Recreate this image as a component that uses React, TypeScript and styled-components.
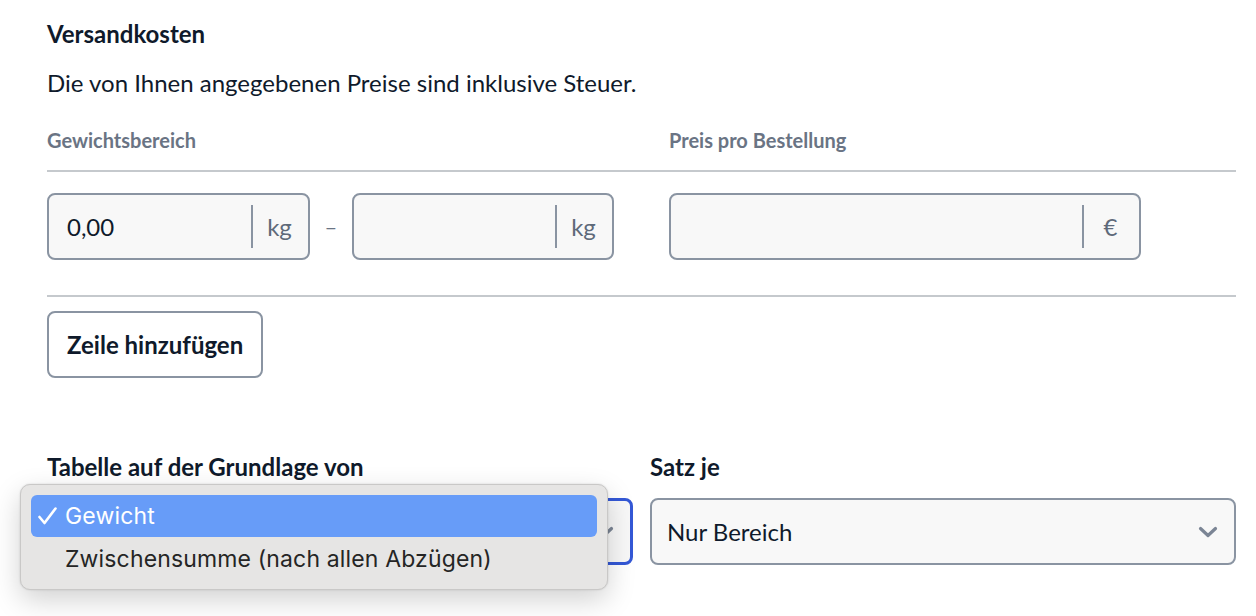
import styled, { createGlobalStyle } from "styled-components";

const GlobalStyle = createGlobalStyle`
  html, body {
    margin: 0;
    padding: 0;
    background: #ffffff;
  }
  body {
    font-family: Lato, "Liberation Sans", sans-serif;
    color: #0f1a2b;
  }
`;

const Page = styled.div`
  box-sizing: border-box;
  min-height: 616px;
  padding: 19px 20px 0 47px;
  width: 1256px;
`;

const Title = styled.h2`
  margin: 0;
  font-size: 24px;
  font-weight: 700;
  line-height: 30px;
`;

const Note = styled.p`
  margin: 19px 0 0;
  font-size: 24px;
  line-height: 30px;
`;

const TableHead = styled.div`
  display: flex;
  margin-top: 30px;
  padding-bottom: 18px;
  border-bottom: 2px solid #c5c9cd;
`;

const HeadCell = styled.div<{ $width?: number }>`
  width: ${(p) => (p.$width ? `${p.$width}px` : "auto")};
  font-size: 20px;
  font-weight: 700;
  line-height: 24px;
  color: #6a7484;
`;

const TableRow = styled.div`
  display: flex;
  align-items: center;
  padding: 21px 0 35px;
  border-bottom: 2px solid #c5c9cd;
`;

const WeightCell = styled.div`
  display: flex;
  align-items: center;
  width: 622px;
`;

const Field = styled.div<{ $width: number }>`
  display: flex;
  align-items: stretch;
  box-sizing: border-box;
  width: ${(p) => p.$width}px;
  height: 67px;
  border: 2px solid #8a94a2;
  border-radius: 8px;
  background: #f8f8f8;
  overflow: hidden;
`;

const FieldValue = styled.div`
  flex: 1;
  display: flex;
  align-items: center;
  padding-left: 18px;
  font-size: 24px;
  color: #0f1a2b;
`;

const Suffix = styled.div`
  display: flex;
  align-items: center;
  justify-content: center;
  width: 57px;
  font-size: 24px;
  color: #5f6a7a;
  position: relative;
  &::before {
    content: "";
    position: absolute;
    left: 0;
    top: 10px;
    bottom: 10px;
    width: 2px;
    background: #8a94a2;
  }
`;

const Dash = styled.span`
  width: 42px;
  text-align: center;
  font-size: 22px;
  color: #6a7484;
`;

const AddButton = styled.button`
  margin-top: 14px;
  box-sizing: border-box;
  height: 67px;
  padding: 0 18px;
  border: 2px solid #8a94a2;
  border-radius: 8px;
  background: #ffffff;
  font-family: inherit;
  font-size: 24px;
  font-weight: 700;
  color: #0f1a2b;
`;

const Options = styled.div`
  display: grid;
  grid-template-columns: 586px 586px;
  column-gap: 17px;
  margin-top: 75px;
`;

const Group = styled.div`
  display: flex;
  flex-direction: column;
  gap: 17px;
`;

const GroupLabel = styled.label`
  font-size: 24px;
  font-weight: 700;
  line-height: 28px;
`;

const SelectBox = styled.div<{ $focused?: boolean }>`
  position: relative;
  display: flex;
  align-items: center;
  justify-content: space-between;
  box-sizing: border-box;
  height: 67px;
  padding: 0 16px 0 15px;
  border: ${(p) => (p.$focused ? "3px solid #3458d6" : "2px solid #8a94a2")};
  border-radius: 8px;
  background: #f8f8f8;
  font-size: 24px;
  color: #0f1a2b;
`;

const Menu = styled.div`
  position: absolute;
  left: -30px;
  top: -17px;
  z-index: 2;
  box-sizing: border-box;
  width: 588px;
  padding: 10px 10px 9px;
  border: 1px solid #c9c8c7;
  border-radius: 10px;
  background: #e6e5e4;
  box-shadow: 0 10px 28px rgba(0, 0, 0, 0.18), 0 0 2px rgba(0, 0, 0, 0.15);
  font-family: Inter, "Noto Sans", sans-serif;
`;

const MenuItem = styled.div<{ $active?: boolean }>`
  display: flex;
  align-items: center;
  height: 42px;
  padding-left: 7px;
  border-radius: 6px;
  background: ${(p) => (p.$active ? "#679cf8" : "transparent")};
  color: ${(p) => (p.$active ? "#ffffff" : "#252525")};
  font-size: 23px;
  letter-spacing: 0.15px;
  & + & {
    margin-top: 1px;
  }
`;

const Check = styled.span`
  display: flex;
  align-items: center;
  width: 27px;
`;

const CheckMark = () => (
  <svg width="19" height="18" viewBox="0 0 19 18" fill="none">
    <path
      d="M1.5 10 L6.5 16 L17.5 1.5"
      stroke="#ffffff"
      strokeWidth="2.6"
      strokeLinecap="round"
      strokeLinejoin="round"
    />
  </svg>
);

const Chevron = () => (
  <svg width="20" height="12" viewBox="0 0 20 12" fill="none">
    <path
      d="M2.5 2.5 L10 9.5 L17.5 2.5"
      stroke="#7b8595"
      strokeWidth="3.2"
      strokeLinecap="round"
      strokeLinejoin="round"
    />
  </svg>
);

export default function App() {
  return (
    <Page>
      <GlobalStyle />
      <Title>Versandkosten</Title>
      <Note>Die von Ihnen angegebenen Preise sind inklusive Steuer.</Note>

      <TableHead>
        <HeadCell $width={622}>Gewichtsbereich</HeadCell>
        <HeadCell>Preis pro Bestellung</HeadCell>
      </TableHead>

      <TableRow>
        <WeightCell>
          <Field $width={263}>
            <FieldValue>0,00</FieldValue>
            <Suffix>kg</Suffix>
          </Field>
          <Dash>–</Dash>
          <Field $width={262}>
            <FieldValue />
            <Suffix>kg</Suffix>
          </Field>
        </WeightCell>
        <Field $width={472}>
          <FieldValue />
          <Suffix>€</Suffix>
        </Field>
      </TableRow>

      <AddButton>Zeile hinzufügen</AddButton>

      <Options>
        <Group>
          <GroupLabel>Tabelle auf der Grundlage von</GroupLabel>
          <SelectBox $focused>
            <span>Gewicht</span>
            <Chevron />
            <Menu>
              <MenuItem $active>
                <Check>
                  <CheckMark />
                </Check>
                Gewicht
              </MenuItem>
              <MenuItem>
                <Check />
                Zwischensumme (nach allen Abzügen)
              </MenuItem>
            </Menu>
          </SelectBox>
        </Group>
        <Group>
          <GroupLabel>Satz je</GroupLabel>
          <SelectBox>
            <span>Nur Bereich</span>
            <Chevron />
          </SelectBox>
        </Group>
      </Options>
    </Page>
  );
}
